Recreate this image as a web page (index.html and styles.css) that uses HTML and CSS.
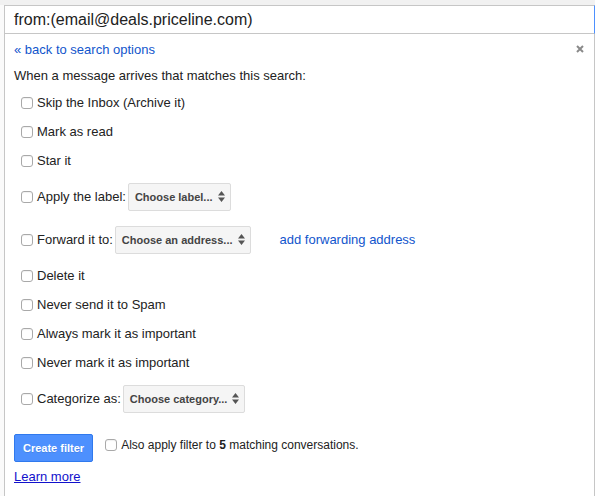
FILE: index.html
```html
<!DOCTYPE html>
<html>
<head>
<meta charset="utf-8">
<link rel="stylesheet" href="styles.css">
</head>
<body>
<div class="topbar"></div>
<div class="wrap">
  <div class="search">from:(email@deals.priceline.com)</div>
  <div class="panel">
    <a class="back" href="#">« back to search options</a>
    <span class="close"><svg width="8" height="8" viewBox="0 0 8 8"><path d="M1 1L7 7M7 1L1 7" stroke="#8a8a8a" stroke-width="2" fill="none"/></svg></span>
    <div class="title">When a message arrives that matches this search:</div>
    <ul class="opts">
      <li class="opt"><input type="checkbox" class="cb"><span>Skip the Inbox (Archive it)</span></li>
      <li class="opt"><input type="checkbox" class="cb"><span>Mark as read</span></li>
      <li class="opt"><input type="checkbox" class="cb"><span>Star it</span></li>
      <li class="opt opt-sel"><input type="checkbox" class="cb"><span>Apply the label:</span>
        <div class="select">Choose label...<svg class="arr" width="7" height="11" viewBox="0 0 7 11"><path d="M0 4.5L3.5 0L7 4.5ZM0 6.5L7 6.5L3.5 11Z" fill="#555"/></svg></div>
      </li>
      <li class="opt opt-sel"><input type="checkbox" class="cb"><span>Forward it to:</span>
        <div class="select">Choose an address...<svg class="arr" width="7" height="11" viewBox="0 0 7 11"><path d="M0 4.5L3.5 0L7 4.5ZM0 6.5L7 6.5L3.5 11Z" fill="#555"/></svg></div>
        <a class="fwd" href="#">add forwarding address</a>
      </li>
      <li class="opt"><input type="checkbox" class="cb"><span>Delete it</span></li>
      <li class="opt"><input type="checkbox" class="cb"><span>Never send it to Spam</span></li>
      <li class="opt"><input type="checkbox" class="cb"><span>Always mark it as important</span></li>
      <li class="opt"><input type="checkbox" class="cb"><span>Never mark it as important</span></li>
      <li class="opt opt-sel"><input type="checkbox" class="cb"><span>Categorize as:</span>
        <div class="select">Choose category...<svg class="arr" width="7" height="11" viewBox="0 0 7 11"><path d="M0 4.5L3.5 0L7 4.5ZM0 6.5L7 6.5L3.5 11Z" fill="#555"/></svg></div>
      </li>
    </ul>
    <div class="actions">
      <button class="btn">Create filter</button>
      <label class="also"><input type="checkbox" class="cb cb-also">Also apply filter to&nbsp;<b>5</b>&nbsp;matching conversations.</label>
    </div>
    <a class="learn" href="#">Learn more</a>
  </div>
</div>
</body>
</html>
```

FILE: styles.css
```css
html, body {
  margin: 0;
  padding: 0;
}
body {
  background: #fafafa;
  font-family: "Liberation Sans", Arial, sans-serif;
  font-size: 13px;
  color: #222;
  height: 496px;
  overflow: hidden;
}
.topbar {
  height: 5px;
  background: #f1f1f1;
}
.wrap {
  margin-left: 4px;
}
.search {
  height: 27px;
  line-height: 27px;
  background: #fff;
  border-top: 1px solid #c6c6c6;
  border-left: 1px solid #c6c6c6;
  border-right: 1px solid #4d90fe;
  border-bottom: 1px solid #c6c6c6;
  padding-left: 9px;
  font-size: 16px;
  color: #222;
}
.panel {
  position: relative;
  background: #fff;
  border-left: 1px solid #c6c6c6;
  border-right: 1px solid #c6c6c6;
  padding: 6px 0 11px 9px;
}
.back {
  display: block;
  height: 20px;
  line-height: 20px;
  color: #15c;
  text-decoration: none;
}
.close {
  position: absolute;
  top: 11px;
  right: 10px;
  width: 8px;
  height: 8px;
  display: block;
}
.close svg {
  display: block;
}
.title {
  margin-top: 6px;
  height: 20px;
  line-height: 20px;
}
.opts {
  list-style: none;
  margin: 2px 0 0;
  padding: 0;
}
.opt {
  display: flex;
  align-items: center;
  height: 29px;
}
.opt-sel {
  height: 43px;
}
.cb {
  -webkit-appearance: none;
  appearance: none;
  width: 12px;
  height: 12px;
  margin: 0 4px 0 7px;
  border: 1px solid #a9a9a9;
  border-radius: 3px;
  background: #fff;
  box-shadow: inset 0 1px 1px rgba(0,0,0,0.06);
  flex: none;
}
.select {
  display: inline-flex;
  align-items: center;
  gap: 5px;
  height: 26px;
  margin-left: 2px;
  padding: 0 5px 0 6px;
  background: #f5f5f5;
  border: 1px solid #dcdcdc;
  border-radius: 2px;
  font-size: 11px;
  font-weight: bold;
  color: #444;
}
.arr {
  display: block;
}
.fwd {
  margin-left: 29px;
  color: #15c;
  text-decoration: none;
}
.actions {
  display: flex;
  align-items: flex-start;
  margin-top: 14px;
}
.btn {
  height: 28px;
  padding: 0 8px;
  background: #4d90fe;
  border: 1px solid #3079ed;
  border-radius: 2px;
  color: #fff;
  font-family: "Liberation Sans", Arial, sans-serif;
  font-size: 11px;
  font-weight: bold;
  text-shadow: 0 1px rgba(0,0,0,0.1);
}
.also {
  display: flex;
  align-items: center;
  height: 22px;
  margin-left: 12px;
  font-size: 12px;
}
.cb-also {
  margin: 0 4px 0 0;
}
.learn {
  display: block;
  margin-top: 7px;
  width: max-content;
  line-height: 16px;
  color: #11c;
  text-decoration: underline;
}
```
